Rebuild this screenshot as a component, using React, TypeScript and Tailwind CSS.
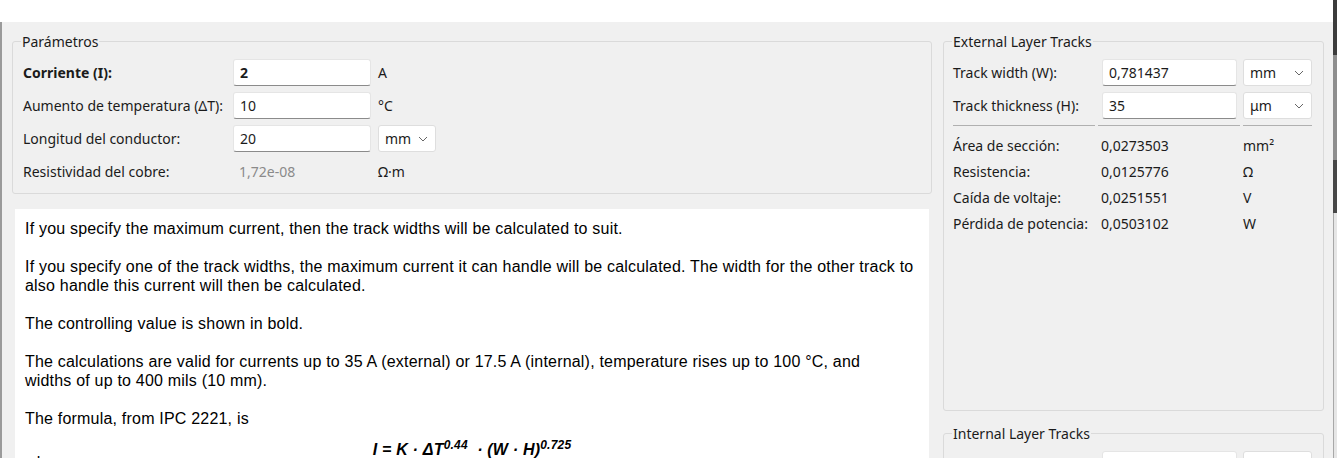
import React from 'react';

const ui = "font-['Noto_Sans','Open_Sans',sans-serif]";

function Chevron() {
    return (
        <svg width="10" height="6" viewBox="0 0 10 6" className="shrink-0">
            <polyline points="1,1 5,5 9,1" fill="none" stroke="#666666" strokeWidth="1" />
        </svg>
    );
}

function TextBox({ value, bold = false }: { value: string; bold?: boolean }) {
    return (
        <input
            defaultValue={value}
            className={`h-[27px] w-full bg-white border border-[#e5e5e5] border-b-[#8b8b8b] rounded-[3px] px-[6px] text-[14px] text-[#1b1b1b] outline-none ${bold ? 'font-bold' : ''}`}
        />
    );
}

function Combo({ value, w = 'w-[69px]' }: { value: string; w?: string }) {
    return (
        <div className={`${w} h-[27px] bg-white border border-[#dedede] rounded-[3px] flex items-center justify-between pl-[6px] pr-[7px] text-[#1b1b1b]`}>
            <span>{value}</span>
            <Chevron />
        </div>
    );
}

export default function App() {
    const results = [
        { label: 'Área de sección:', value: '0,0273503', unit: 'mm²' },
        { label: 'Resistencia:', value: '0,0125776', unit: 'Ω' },
        { label: 'Caída de voltaje:', value: '0,0251551', unit: 'V' },
        { label: 'Pérdida de potencia:', value: '0,0503102', unit: 'W' },
    ];

    return (
        <div className={`w-[1337px] h-[458px] flex overflow-hidden bg-[#f0f0f0] text-[14px] text-[#1b1b1b] ${ui}`}>
            <div className="flex-1 flex flex-col min-w-0">
                <div className="h-[22px] bg-white shrink-0" />

                <div className="flex flex-1 min-h-0">
                    {/* Left column */}
                    <div className="w-[932px] shrink-0 flex flex-col border-l-2 border-[#9a9a9a]">
                        <fieldset className="ml-[10px] mt-[10px] w-[920px] border border-[#dadada] rounded-[3px] pl-[10px] pt-[8px] pb-[8px]">
                            <legend className="-ml-[2px] px-px leading-[19px]">Parámetros</legend>
                            <div className="grid grid-cols-[210px_138px_1fr] gap-y-[6px] items-center">
                                <span className="font-bold">Corriente (I):</span>
                                <TextBox value="2" bold />
                                <span className="ml-[7px]">A</span>

                                <span>Aumento de temperatura (ΔT):</span>
                                <TextBox value="10" />
                                <span className="ml-[7px]">°C</span>

                                <span>Longitud del conductor:</span>
                                <TextBox value="20" />
                                <div className="ml-[7px]"><Combo value="mm" w="w-[58px]" /></div>

                                <span>Resistividad del cobre:</span>
                                <div className="h-[27px] px-[6px] flex items-center text-[#8a8a8a]">1,72e-08</div>
                                <span className="ml-[7px]">Ω·m</span>
                            </div>
                        </fieldset>

                        {/* Help text */}
                        <div className="ml-[13px] mt-[15px] w-[914px] flex-1 bg-white pl-[10px] pt-[10px] font-['Liberation_Sans',Arial,sans-serif] text-[16px] leading-[19px] tracking-[0.2px] text-black overflow-hidden">
                            <div className="w-[900px]">
                                <p className="mb-[19px]">If you specify the maximum current, then the track widths will be calculated to suit.</p>
                                <p className="mb-[19px]">If you specify one of the track widths, the maximum current it can handle will be calculated. The width for the other track to<br />also handle this current will then be calculated.</p>
                                <p className="mb-[19px]">The controlling value is shown in bold.</p>
                                <p className="mb-[19px]">The calculations are valid for currents up to 35 A (external) or 17.5 A (internal), temperature rises up to 100 °C, and<br />widths of up to 400 mils (10 mm).</p>
                                <p>The formula, from IPC 2221, is</p>
                            </div>
                            <p className="mt-[12px] text-center font-bold italic pr-[10px]">
                                I = K · ΔT<sup className="text-[12px]">0.44</sup>&nbsp; · (W · H)<sup className="text-[12px]">0.725</sup>
                            </p>
                            <p className="-mt-[6px]">where:</p>
                        </div>
                    </div>

                    {/* Right column */}
                    <div className="flex-1 pl-[11px] flex flex-col">
                        <fieldset className="mt-[10px] w-[381px] h-[379px] shrink-0 border border-[#dadada] rounded-[3px] pl-[9px] pt-[8px]">
                            <legend className="-ml-[1px] px-px leading-[19px]">External Layer Tracks</legend>
                            <div className="grid grid-cols-[143px_135px_69px] gap-x-[6px] gap-y-[6px] items-center">
                                <span>Track width (W):</span>
                                <TextBox value="0,781437" />
                                <Combo value="mm" />

                                <span>Track thickness (H):</span>
                                <TextBox value="35" />
                                <Combo value="μm" />
                            </div>
                            <div className="flex gap-[3px] mt-[6px] w-[359px]">
                                <div className="w-[142px] h-px bg-[#b0b0b0]" />
                                <div className="w-[142px] h-px bg-[#b0b0b0]" />
                                <div className="flex-1 h-px bg-[#b0b0b0]" />
                            </div>
                            <div className="grid grid-cols-[148px_142px_1fr] mt-[7px]">
                                {results.map((r) => (
                                    <React.Fragment key={r.label}>
                                        <span className="h-[26px] leading-[26px]">{r.label}</span>
                                        <span className="h-[26px] leading-[26px]">{r.value}</span>
                                        <span className="h-[26px] leading-[26px]">{r.unit}</span>
                                    </React.Fragment>
                                ))}
                            </div>
                        </fieldset>

                        <fieldset className="mt-[13px] w-[381px] border border-[#dadada] rounded-[3px] pl-[9px] pt-[8px]">
                            <legend className="-ml-[1px] px-px leading-[19px]">Internal Layer Tracks</legend>
                            <div className="grid grid-cols-[143px_135px_69px] gap-x-[6px] items-center">
                                <span className="h-[27px]" />
                                <div className="h-[27px] bg-white border border-[#e5e5e5] rounded-[3px]" />
                                <div className="h-[27px] bg-white border border-[#dedede] rounded-[3px]" />
                            </div>
                        </fieldset>
                    </div>
                </div>
            </div>

            {/* Edge of the window behind */}
            <div className="w-[4px] shrink-0 flex flex-col">
                <div className="h-[55px] bg-[#3c3c3c]" />
                <div className="h-[105px] bg-[#8e8e8e]" />
                <div className="h-[53px] bg-[#474747]" />
                <div className="flex-1 bg-[#e6e6e6] border-l border-[#a8a8a8]" />
            </div>
        </div>
    );
}
